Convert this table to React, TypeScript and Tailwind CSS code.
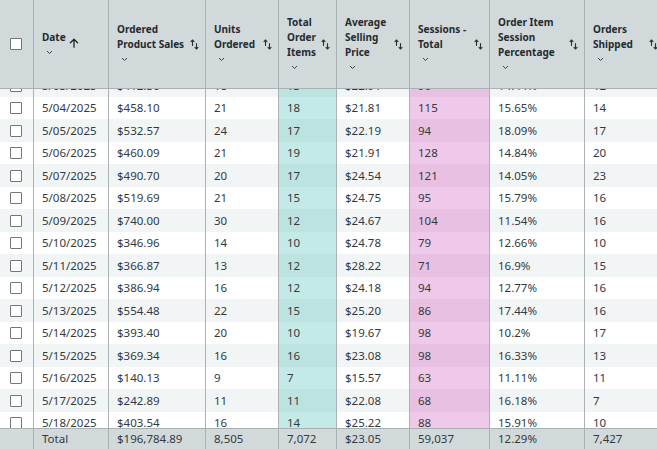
import React from "react";

type Row = [string, string, string, string, string, string, string, string];

const rows: Row[] = [
  ["5/03/2025", "$412.36", "18", "13", "$22.91", "90", "14.44%", "12"],
  ["5/04/2025", "$458.10", "21", "18", "$21.81", "115", "15.65%", "14"],
  ["5/05/2025", "$532.57", "24", "17", "$22.19", "94", "18.09%", "17"],
  ["5/06/2025", "$460.09", "21", "19", "$21.91", "128", "14.84%", "20"],
  ["5/07/2025", "$490.70", "20", "17", "$24.54", "121", "14.05%", "23"],
  ["5/08/2025", "$519.69", "21", "15", "$24.75", "95", "15.79%", "16"],
  ["5/09/2025", "$740.00", "30", "12", "$24.67", "104", "11.54%", "16"],
  ["5/10/2025", "$346.96", "14", "10", "$24.78", "79", "12.66%", "10"],
  ["5/11/2025", "$366.87", "13", "12", "$28.22", "71", "16.9%", "15"],
  ["5/12/2025", "$386.94", "16", "12", "$24.18", "94", "12.77%", "16"],
  ["5/13/2025", "$554.48", "22", "15", "$25.20", "86", "17.44%", "16"],
  ["5/14/2025", "$393.40", "20", "10", "$19.67", "98", "10.2%", "17"],
  ["5/15/2025", "$369.34", "16", "16", "$23.08", "98", "16.33%", "13"],
  ["5/16/2025", "$140.13", "9", "7", "$15.57", "63", "11.11%", "11"],
  ["5/17/2025", "$242.89", "11", "11", "$22.08", "68", "16.18%", "7"],
  ["5/18/2025", "$403.54", "16", "14", "$25.22", "88", "15.91%", "10"],
];

const totals = ["Total", "$196,784.89", "8,505", "7,072", "$23.05", "59,037", "12.29%", "7,427"];

const headers: string[][] = [
  ["Date"],
  ["Ordered", "Product Sales"],
  ["Units", "Ordered"],
  ["Total", "Order", "Items"],
  ["Average", "Selling", "Price"],
  ["Sessions -", "Total"],
  ["Order Item", "Session", "Percentage"],
  ["Orders", "Shipped"],
];

const grid = "grid grid-cols-[34px_75px_97px_73px_58px_73px_80px_95px_80px]";
const line = "border-r border-[#aab2b3]";

function Chevron() {
  return (
    <svg width="7" height="5" viewBox="0 0 7 5" className="ml-[4px] mt-[5px] mb-[4px]">
      <polyline points="1,1 3.5,3.5 6,1" fill="none" stroke="#3a4247" strokeWidth="1" />
    </svg>
  );
}

function SortIcon() {
  return (
    <svg width="9" height="11" viewBox="0 0 9 11" className="shrink-0">
      <g fill="none" stroke="#2b3236" strokeWidth="1.1" strokeLinecap="round" strokeLinejoin="round">
        <path d="M2.5 1v5.5M1 2.6 2.5 1 4 2.6" />
        <path d="M6.5 4.5V10M5 8.4 6.5 10 8 8.4" />
      </g>
    </svg>
  );
}

function UpArrow() {
  return (
    <svg width="10" height="10" viewBox="0 0 10 10" className="ml-[3px] mt-[8.5px] shrink-0">
      <g fill="none" stroke="#1f2629" strokeWidth="1.3" strokeLinecap="round" strokeLinejoin="round">
        <path d="M5 1.2v8M1.4 4.8 5 1.2l3.6 3.6" />
      </g>
    </svg>
  );
}

function Checkbox() {
  return <div className="w-[12px] h-[12px] border border-[#6f777b] bg-white rounded-[1px]" />;
}

export default function App() {
  return (
    <div
      className="w-[657px] h-[449px] overflow-hidden flex flex-col bg-white text-[#333a3e]"
      style={{ fontFamily: "'Noto Sans', 'Open Sans', sans-serif" }}
    >
      {/* Header */}
      <div className={`${grid} h-[89px] shrink-0 bg-[#d2d9da] border-b border-[#a9b1b2]`}>
        <div className={`${line} flex items-center pl-[10px]`}>
          <Checkbox />
        </div>
        {headers.map((h, i) => (
          <div
            key={i}
            className={`${line} flex items-center justify-between pl-2 pr-[6px] text-[10px] font-bold leading-[15px] text-[#232b30]`}
          >
            {i === 0 ? (
              <div className="flex items-start">
                <div className="flex flex-col">
                  <span>Date</span>
                  <Chevron />
                </div>
                <UpArrow />
              </div>
            ) : (
              <>
                <div className="flex flex-col whitespace-nowrap">
                  {h.map((t) => (
                    <span key={t}>{t}</span>
                  ))}
                  <Chevron />
                </div>
                <SortIcon />
              </>
            )}
          </div>
        ))}
      </div>

      {/* Body, scrolled a little */}
      <div className="flex-1 overflow-hidden">
        <div className="-mt-[14.75px]">
          {rows.map((r, idx) => {
            const stripe = idx % 2 === 0;
            return (
              <div
                key={r[0]}
                className={`${grid} h-[22.5px] text-[11.5px] ${stripe ? "bg-[#f2f5f5]" : "bg-white"}`}
              >
                <div className={`${line} flex items-center pl-[10px]`}>
                  <Checkbox />
                </div>
                {r.map((v, c) => {
                  let bg = "";
                  if (c === 3) bg = stripe ? "bg-[#bde3e0]" : "bg-[#c4eae7]";
                  if (c === 5) bg = stripe ? "bg-[#e8c1e2]" : "bg-[#efc9e9]";
                  return (
                    <div key={c} className={`${line} ${bg} flex items-center pl-2`}>
                      {v}
                    </div>
                  );
                })}
              </div>
            );
          })}
        </div>
      </div>

      {/* Footer totals */}
      <div className={`${grid} h-[21px] shrink-0 bg-[#d2d9da] border-t border-[#a9b1b2] text-[11.5px]`}>
        <div className={line} />
        {totals.map((t, i) => (
          <div key={i} className={`${line} flex items-center pl-2`}>
            {t}
          </div>
        ))}
      </div>
    </div>
  );
}
